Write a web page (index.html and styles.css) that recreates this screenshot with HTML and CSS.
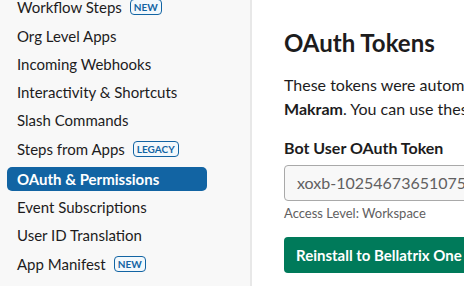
FILE: index.html
```html
<!DOCTYPE html>
<html lang="en">
<head>
    <meta charset="UTF-8">
    <title>OAuth &amp; Permissions</title>
    <link rel="stylesheet" href="styles.css">
</head>
<body>

<div class="layout">
    <aside class="sidebar">
        <ul class="nav">
            <li class="nav-item with-badge">Workflow Steps <span class="badge">NEW</span></li>
            <li class="nav-item">Org Level Apps</li>
            <li class="nav-item">Incoming Webhooks</li>
            <li class="nav-item">Interactivity &amp; Shortcuts</li>
            <li class="nav-item">Slash Commands</li>
            <li class="nav-item with-badge">Steps from Apps <span class="badge">LEGACY</span></li>
            <li class="nav-item active">OAuth &amp; Permissions</li>
            <li class="nav-item">Event Subscriptions</li>
            <li class="nav-item">User ID Translation</li>
            <li class="nav-item with-badge">App Manifest <span class="badge">NEW</span></li>
        </ul>
    </aside>

    <main class="content">
        <h2>OAuth Tokens</h2>
        <p class="intro">These tokens were automatically generated when you installed the app to<br>
            <strong>Makram</strong>. You can use these to authenticate your app.</p>

        <label class="field-label">Bot User OAuth Token</label>
        <div class="token-box">xoxb-1025467365107528-5049367719734-aG6qKzT9bNwLp</div>
        <div class="hint">Access Level: Workspace</div>

        <button class="btn-reinstall">Reinstall to Bellatrix One</button>
    </main>
</div>

</body>
</html>
```

FILE: styles.css
```css
body {
    font-family: Lato, 'Noto Sans', sans-serif;
    margin: 0;
    padding: 0;
    color: #1d1c1d;
    background: #fff;
    overflow: hidden;
}

.layout {
    display: flex;
    height: 286px;
    overflow: hidden;
}

.sidebar {
    width: 250px;
    flex-shrink: 0;
    background: #f8f8f8;
    border-right: 2px solid #e8e8e8;
}

.nav {
    list-style: none;
    width: 200px;
    margin: -8px 0 0 7px;
    padding: 0;
}

.nav-item {
    display: flex;
    align-items: center;
    height: 28px;
    padding-left: 10px;
    font-size: 15px;
    white-space: nowrap;
}

.nav-item.with-badge {
    height: 30px;
}

.nav-item.active {
    height: 24px;
    margin: 3px 0 2px;
    background: #1264a3;
    color: #fff;
    font-weight: 700;
    border-radius: 5px;
}

.badge {
    margin-left: 8px;
    padding: 0 3px;
    height: 14px;
    line-height: 14px;
    font-size: 10px;
    font-weight: 700;
    color: #1264a3;
    background: #f2f8fc;
    border: 1px solid #1264a3;
    border-radius: 4px;
}

.content {
    padding: 26px 0 0 32px;
    width: 600px;
    flex-shrink: 0;
}

h2 {
    font-size: 24px;
    font-weight: 700;
    margin: 0 0 13px;
    line-height: 34px;
}

.intro {
    font-size: 16px;
    line-height: 24px;
    margin: 0 0 17px;
}

.field-label {
    display: block;
    font-size: 16px;
    line-height: 20px;
    font-weight: 700;
    margin-bottom: 7px;
}

.token-box {
    height: 34px;
    line-height: 34px;
    padding-left: 12px;
    border: 1px solid #a9a9a9;
    border-radius: 4px;
    background: #f8f8f8;
    color: #616061;
    font-size: 16px;
}

.hint {
    font-size: 13px;
    line-height: 16px;
    color: #616061;
    margin-top: 4px;
}

.btn-reinstall {
    display: block;
    margin-top: 16px;
    height: 36px;
    padding: 0 12px;
    background: #007a5a;
    color: #fff;
    border: none;
    border-radius: 4px;
    font-family: Lato, sans-serif;
    font-size: 15px;
    font-weight: 700;
    white-space: nowrap;
}
```
